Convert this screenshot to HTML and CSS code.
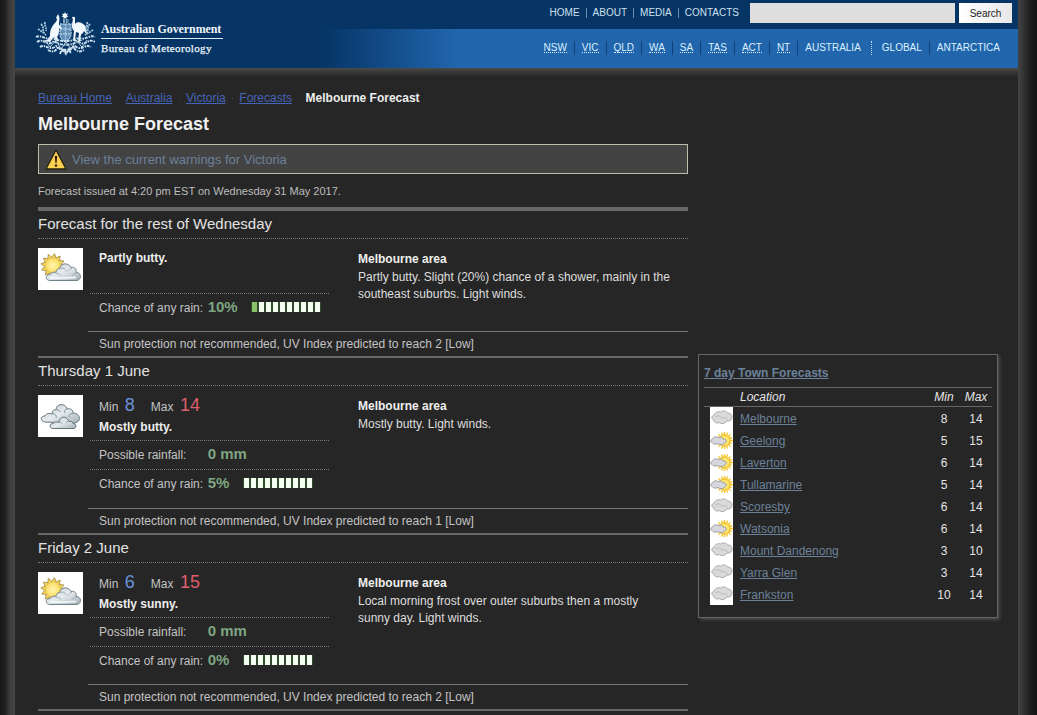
FILE: index.html
```html
<!DOCTYPE html>
<html lang="en">
<head>
<meta charset="utf-8">
<title>Melbourne Forecast</title>
<link rel="stylesheet" href="styles.css">
</head>
<body>
<svg class="defs" width="0" height="0" aria-hidden="true">
  <defs>
    <linearGradient id="cloudfill" x1="0" y1="0" x2="1" y2="1"><stop offset="0" stop-color="#c3ccd2"/><stop offset=".5" stop-color="#e4eaed"/><stop offset="1" stop-color="#a2afb5"/></linearGradient>
    <radialGradient id="sunfill"><stop offset="0" stop-color="#fff6b0"/><stop offset="1" stop-color="#fadb62"/></radialGradient>
    <symbol id="partly" viewBox="0 0 45 42">
      <path transform="translate(14.800 17.500) rotate(8)" d="M12 0L8 2.100 10.400 6 5.900 5.900 6 10.400 2.100 8 0 12-2.100 8-6 10.400-5.900 5.900-10.400 6-8 2.100-12 0-8-2.100-10.400-6-5.900-5.900-6-10.400-2.100-8 0-12 2.100-8 6-10.400 5.900-5.900 10.400-6 8-2.100z" fill="#f5d35c" stroke="#a08c45" stroke-width=".8"/>
      <circle cx="14.800" cy="17.500" r="7.500" fill="url(#sunfill)" stroke="#d9b94c" stroke-width=".6"/>
      <path d="M12 32.500c-5 0-5-6 0-6 1-2 4-3 6-2 0-3 2-4 4-4 0-6 9-6 11-1 4-1 6 2 5 5 6 0 6 8 0 8z" fill="url(#cloudfill)" stroke="#71838a"/>
      <path d="M23 20.500c3-1 5 1 5 3m6-3c-2 0-3 1-4 3m-12 2c3 0 4 1 5 2m15-2c-2 0-3 1-4 2" fill="none" stroke="#94a2a8" stroke-width=".8"/>
      <path d="M12 29.500c8 1 18 0 26 0" stroke="#f7fafb" stroke-width="1.500" fill="none"/>
    </symbol>
    <symbol id="cloudy" viewBox="0 0 45 42">
      <path d="M7 27c-5-1-5-6 0-6 1-3 5-3 7-2 0-3 2-5 4-4 0-7 10-7 11-1 4-1 6 1 6 4 6 0 9 7 4 9-3 2-6 1-9 1z" fill="url(#cloudfill)" stroke="#66777c"/>
      <path d="M19 15c2 0 3 1 3 2m-8 2c3-1 5 2 4 4m11-9c-2 0-3 2-2 4m8 1c-3-1-4 1-4 3" fill="none" stroke="#85949a"/>
      <path d="M15 33.500c-4 0-4-5 0-5 2-2 4-2 6-1 0-6 7-8 10-1 3-1 4 1 4 2 4 0 4 5 0 5z" fill="url(#cloudfill)" stroke="#66777c"/>
      <path d="M21 27c2 0 3 1 3 2m7-3c-2 0-3 1-3 2" fill="none" stroke="#85949a" stroke-width=".8"/>
    </symbol>
    <symbol id="mini-cloud" viewBox="0 0 23 22">
      <path d="M4 13c-3-1-3-4 0-4.500C5 5 8 4 10.500 5c3-2 6-1 7 1 3 0 5 2 4.500 4.500 0 2-2 4-5 3.500C15 17 11 17 9.500 15.500 7 17 4 15.500 4 13z" fill="#dadada" stroke="#9a9a9a" stroke-width=".8"/>
      <path d="M5.500 10c3-2 5-1 6 1 3-1 5 0 5.500 2" fill="none" stroke="#b0b0b0" stroke-width=".8"/>
    </symbol>
    <symbol id="mini-partly" viewBox="0 0 23 22">
      <path d="M14.500 3v17M6 11.500h17M8.500 5.500l12 12M20.500 5.500l-12 12M11.500 3.500l6 16M17.500 3.500l-6 16M6.500 8.500l15 6M22 8.500l-15 6" stroke="#f3c62e" stroke-width="1.400"/>
      <circle cx="14.500" cy="11.500" r="5.500" fill="#fde66f" stroke="#f2c12b" stroke-width="1.300"/>
      <path d="M2 13.500c-2-1-2-2.500 0-3C3 8 6 7 8 8.500c3-1 5 0 5 1.500 4 0 4 3 2 3.500 0 2-5 3-7 1-2 1-5 1-6-1z" fill="#d6d6de" stroke="#98989e" stroke-width=".9"/>
    </symbol>
    <symbol id="meter" viewBox="0 0 70 10">
      <path d="M0 0h70v10H0z" fill="#334a31"/>
      <path d="M1 0h5v10H1zM8 0h5v10H8zM15 0h5v10h-5zM22 0h5v10h-5zM29 0h5v10h-5zM36 0h5v10h-5zM43 0h5v10h-5zM50 0h5v10h-5zM57 0h5v10h-5zM64 0h5v10h-5z" fill="#f2fdf0"/>
    </symbol>
  </defs>
</svg>
<div class="frame">
<div class="page">
  <header class="header">
    <div class="brand">
      <svg class="crest" viewBox="0 0 61 44">
        <path d="M25 12h11v10c0 4-3 6-5.500 8C27 28 25 26 25 22z" fill="#5f8db6"/>
        <path d="M25 12h11v10c0 4-3 6-5.500 8C27 28 25 26 25 22zM25 17h11M25 22h11M30.500 12v17M28 8h6M28 10h6" fill="none" stroke="#a9c7df" stroke-width="1.400" stroke-dasharray="2 .7"/>
        <g fill="#f2f8fc">
          <path d="M30 0l1 2 2-.5-1 2 1.500 1-2 .5v2l-1.500-1-1.500 1V5l-2-.5 1.500-1-1-2 2 .5z"/>
          <path d="M24 4l-1-2-1 2-1 2 1 1c0 3-3 4-5 8-2 3-2 6-2 9l-3 4-5 1 8 1 4-5 2 4h3l-2-4c2-2 2-6 2-9l3 1v-1l-3-3c0-4 1-5 0-9z"/>
          <path d="M37 6c1-2 3-1 3 0v6c2-3 8-2 11 3l1 8-3-4c-1 3-3 3-3 4l-1 5 3 1h-5l1-8-3-1-1 8 3 1h-5l1-10c-3-3-2-7-1-12z"/>
        </g>
        <path d="M6 12c4 4 0 7 5 11M10 10c-1 4 2 5 1 9M3 17l6 4M55 12c-4 4 0 7-5 11M52 10c1 4-2 5-1 9M58 18l-6 4" fill="none" stroke="#a5c5dd" stroke-width="1.800" stroke-dasharray="2 .8"/>
        <path d="M1 25c5-3 10 4 17 1 5 4 19 4 25 0 7 3 12-4 17-1M2 30c7-5 9 6 17-1 5 5 19 5 24 0 8 7 10-4 17 1M5 35c6-4 9 5 16-1 6 5 13 5 19 0 7 6 10-3 16 1M13 38c5 3 8 1 10-3 5 6 10 6 15 0 3 4 6 6 11 3M25 42l2-5 4 5 3-5 2 5" fill="none" stroke="#d2e4f0" stroke-width="1.900" stroke-dasharray="3 1 1.500 .8"/>
        <path d="M10 28l5 7 6-7 5 9 5-7 5 7 5-9 6 7 5-7" fill="none" stroke="#bad5e7" stroke-width="1"/>
      </svg>
      <div class="brand-text">
        <div class="gov">Australian Government</div>
        <div class="bureau">Bureau of Meteorology</div>
      </div>
    </div>
    <div class="header-right">
      <div class="toprow">
        <nav class="topnav"><a>HOME</a><a>ABOUT</a><a>MEDIA</a><a>CONTACTS</a></nav>
        <div class="searchbox"></div>
        <div class="searchbtn">Search</div>
      </div>
      <nav class="statenav">
        <a><abbr>NSW</abbr></a><a><abbr>VIC</abbr></a><a><abbr>QLD</abbr></a><a><abbr>WA</abbr></a><a><abbr>SA</abbr></a><a><abbr>TAS</abbr></a><a><abbr>ACT</abbr></a><a><abbr>NT</abbr></a><a class="national">AUSTRALIA</a><a class="global">GLOBAL</a><a>ANTARCTICA</a>
      </nav>
    </div>
  </header>
  <div class="content">
    <main class="main">
      <div class="crumbs"><a>Bureau Home</a><i></i><a>Australia</a><i></i><a>Victoria</a><i></i><a>Forecasts</a><i></i><b>Melbourne Forecast</b></div>
      <h1>Melbourne Forecast</h1>
      <div class="warning">
        <svg viewBox="0 0 22 21"><path d="M11 1L21 20H1z" fill="#fbcf50" stroke="#2a2312" stroke-width="1.300" stroke-linejoin="round"/><path d="M9.800 7h2.400l-.6 7h-1.200z" fill="#2b1c0c"/><circle cx="11" cy="16.500" r="1.200" fill="#2b1c0c"/></svg>
        <a>View the current warnings for Victoria</a>
      </div>
      <p class="issued">Forecast issued at 4:20 pm EST on Wednesday 31 May 2017.</p>

      <section class="day first">
        <h2>Forecast for the rest of Wednesday</h2>
        <div class="body">
          <svg class="icon"><use href="#partly"/></svg>
          <div class="fields">
            <div class="summary tall">Partly butty.</div>
            <div class="row"><span class="label">Chance of any rain:</span><span class="value">10%</span><svg class="meter" viewBox="0 0 70 10"><use href="#meter"/><path d="M1 0h5v10H1z" fill="#86c268"/></svg></div>
          </div>
          <div class="area"><h3>Melbourne area</h3><p>Partly butty. Slight (20%) chance of a shower, mainly in the southeast suburbs. Light winds.</p></div>
        </div>
        <div class="sun">Sun protection not recommended, UV Index predicted to reach 2 [Low]</div>
      </section>

      <section class="day">
        <h2>Thursday 1 June</h2>
        <div class="body">
          <svg class="icon"><use href="#cloudy"/></svg>
          <div class="fields">
            <div class="temps"><span>Min</span><span class="min">8</span><span>Max</span><span class="max">14</span></div>
            <div class="summary">Mostly butty.</div>
            <div class="row"><span class="label">Possible rainfall:</span><span class="value">0 mm</span></div>
            <div class="row"><span class="label">Chance of any rain:</span><span class="value">5%</span><svg class="meter" viewBox="0 0 70 10"><use href="#meter"/></svg></div>
          </div>
          <div class="area"><h3>Melbourne area</h3><p>Mostly butty. Light winds.</p></div>
        </div>
        <div class="sun">Sun protection not recommended, UV Index predicted to reach 1 [Low]</div>
      </section>

      <section class="day last">
        <h2>Friday 2 June</h2>
        <div class="body">
          <svg class="icon"><use href="#partly"/></svg>
          <div class="fields">
            <div class="temps"><span>Min</span><span class="min">6</span><span>Max</span><span class="max">15</span></div>
            <div class="summary">Mostly sunny.</div>
            <div class="row"><span class="label">Possible rainfall:</span><span class="value">0 mm</span></div>
            <div class="row"><span class="label">Chance of any rain:</span><span class="value">0%</span><svg class="meter" viewBox="0 0 70 10"><use href="#meter"/></svg></div>
          </div>
          <div class="area"><h3>Melbourne area</h3><p>Local morning frost over outer suburbs then a mostly sunny day. Light winds.</p></div>
        </div>
        <div class="sun">Sun protection not recommended, UV Index predicted to reach 2 [Low]</div>
      </section>
    </main>
    <aside class="towns">
      <h4><a>7 day Town Forecasts</a></h4>
      <div class="town head"><span></span><span>Location</span><span class="num">Min</span><span class="num">Max</span></div>
      <div class="town"><svg><use href="#mini-cloud"/></svg><a>Melbourne</a><span class="num">8</span><span class="num">14</span></div>
      <div class="town"><svg><use href="#mini-partly"/></svg><a>Geelong</a><span class="num">5</span><span class="num">15</span></div>
      <div class="town"><svg><use href="#mini-partly"/></svg><a>Laverton</a><span class="num">6</span><span class="num">14</span></div>
      <div class="town"><svg><use href="#mini-partly"/></svg><a>Tullamarine</a><span class="num">5</span><span class="num">14</span></div>
      <div class="town"><svg><use href="#mini-cloud"/></svg><a>Scoresby</a><span class="num">6</span><span class="num">14</span></div>
      <div class="town"><svg><use href="#mini-partly"/></svg><a>Watsonia</a><span class="num">6</span><span class="num">14</span></div>
      <div class="town"><svg><use href="#mini-cloud"/></svg><a>Mount Dandenong</a><span class="num">3</span><span class="num">10</span></div>
      <div class="town"><svg><use href="#mini-cloud"/></svg><a>Yarra Glen</a><span class="num">3</span><span class="num">14</span></div>
      <div class="town"><svg><use href="#mini-cloud"/></svg><a>Frankston</a><span class="num">10</span><span class="num">14</span></div>
    </aside>
  </div>
</div>
</div>
</body>
</html>
```
FILE: styles.css
```css
* { box-sizing: border-box; }
body {
  margin: 0;
  background: #1b1b1b;
  color: #c4c4c4;
  font: 12px/18px "Liberation Sans", Arial, sans-serif;
}
h1, h2, h3, h4, p { margin: 0; font-size: inherit; }
svg { display: block; flex: none; }
.defs { height: 0; }

.frame {
  height: 715px;
  overflow: hidden;
  padding: 0 19px 0 15px;
  background:
    linear-gradient(90deg, #181818, #1f1f1f 5px, #3d3d3d 10px, #454545 15px) left / 15px 100% no-repeat,
    linear-gradient(90deg, #444, #383838 4px, #1c1c1c 13px, #151515) right / 19px 100% no-repeat;
}
.page { height: 715px; background: #262626; }

.header {
  display: flex;
  height: 68px;
  background:
    linear-gradient(90deg, #053465 305px, #2165ac 440px) 0 29px / 100% 39px no-repeat,
    #053465;
}
.brand { display: flex; padding: 12px 0 0 20px; width: 420px; }
.crest { width: 61px; height: 44px; margin-right: 5px; }
.brand-text {
  font-family: "Liberation Serif", serif;
  color: #eef4fa;
  width: 122px;
  white-space: nowrap;
}
.gov { font-size: 12px; font-weight: bold; letter-spacing: -.1px; height: 27px; line-height: 35px; border-bottom: 1px solid #dcebf5; }
.bureau { font-size: 11px; line-height: 19px; letter-spacing: .36px; -webkit-text-stroke: .25px #eef4fa; }
.header-right { flex: 1; }
.toprow { display: flex; justify-content: flex-end; height: 29px; padding: 3px 6px 0 0; }
.topnav { display: flex; font-size: 10px; line-height: 19px; color: #cfe0ee; }
.topnav a { margin-right: 13px; position: relative; }
.topnav a:last-child { margin-right: 11px; }
.topnav a:not(:last-child)::after { content: ""; position: absolute; right: -7px; top: 5px; height: 10px; width: 1px; background: #6c8cab; }
.searchbox { width: 205px; height: 20px; background: #dedede; margin-right: 4px; }
.searchbtn { width: 53px; height: 20px; background: linear-gradient(90deg, #fff, #e8e8e8); color: #222; font-size: 10px; line-height: 21px; text-align: center; }
.statenav { display: flex; justify-content: flex-end; font-size: 10px; color: #dcf0ff; padding: 12px 18px 0 0; line-height: 13px; }
.statenav a { padding: 0 7px 0 7px; border-right: 1px solid #0c417c; height: 14px; }
.statenav a:last-child { border: 0; padding-right: 0; }
.statenav .national { padding-right: 10px; border-right: 1px dotted #b8dcf5; }
.statenav .global { padding-left: 10px; }
.statenav abbr { display: block; height: 12px; border-bottom: 1px dotted #e0f0ff; text-decoration: none; }

.content {
  display: flex;
  align-items: flex-start;
  gap: 10px;
  padding: 21px 0 0 23px;
  background: linear-gradient(#4a4a47, #383838 4px, #262626 9px) no-repeat;
}
.main { width: 650px; flex: none; }
.crumbs { display: flex; line-height: 18px; }
.crumbs a { color: #4464b8; text-decoration: underline; }
.crumbs b { color: #ededed; }
.crumbs i { width: 1px; height: 1px; background: #444; margin: 9px 6.300px 0; }
h1 { font-size: 18px; line-height: 22px; color: #f0f0f0; margin-top: 6px; }
.warning {
  display: flex;
  align-items: center;
  height: 30px;
  margin-top: 9px;
  padding-left: 6px;
  border: 1px solid #bdbdae;
  background: #434343;
  color: #6b8199;
  font-size: 13px;
}
.warning svg { width: 22px; height: 21px; margin-right: 5px; }
.warning a { padding-top: 2px; }
.issued { font-size: 11px; line-height: 16px; margin: 9px 0 8px; color: #bdbdbd; }

.day { border-top: 2px solid #686868; }
.day.first { border-top-width: 4px; }
.day.last { border-bottom: 2px solid #686868; }
h2 { font-size: 15px; font-weight: normal; line-height: 25px; height: 28px; color: #e2e2e2; border-bottom: 1px dotted #777; }
.body { display: flex; height: 122px; padding-top: 9px; }
.first .body { height: 92px; }
.last .body { height: 121px; }
.icon { width: 45px; height: 42px; background: #fff; }
.fields { width: 239px; margin-left: 7px; }
.temps { display: flex; height: 21px; align-items: baseline; padding-left: 9px; line-height: 21px; }
.temps .min { font-size: 18px; color: #6a92dc; width: 26px; margin-left: 6.500px; }
.temps .max { font-size: 18px; color: #df5f6c; margin-left: 6.500px; }
.summary { height: 24px; line-height: 22px; padding-left: 9px; font-weight: bold; color: #eee; }
.summary.tall { height: 45px; line-height: 20px; }
.row { display: flex; border-top: 1px dotted #777; height: 29px; padding-left: 9px; line-height: 29px; }
.label { width: 108.700px; }
.value { font-size: 15px; line-height: 26px; font-weight: bold; color: #7da581; }
.meter { width: 70px; height: 10px; margin: 8px 0 0 13.300px; }
.area { width: 314px; margin-left: 29px; padding-top: 2px; line-height: 17px; color: #dedede; }
.area h3 { line-height: 18px; color: #eee; }
.area p { padding-top: 1px; }
.sun { margin-left: 50px; padding-left: 11px; border-top: 1px solid #777; height: 25px; line-height: 24px; }

.towns {
  width: 300px;
  height: 264px;
  margin-top: 265px;
  padding: 9px 5px;
  border: 1px solid #666;
  box-shadow: 2px 2px 3px #484848;
}
h4 { height: 23px; line-height: 18px; color: #6b8199; text-decoration: underline; }
.town { display: grid; grid-template-columns: 30px 188px 32px 32px; height: 22px; line-height: 24px; padding-left: 6px; color: #e4e4e4; }
.town.head { height: 20px; line-height: 18px; border: solid #666; border-width: 1px 0; font-style: italic; }
.town svg { width: 23px; height: 22px; background: #fff; }
.town a { color: #6b8199; text-decoration: underline; }
.num { text-align: center; }
```
